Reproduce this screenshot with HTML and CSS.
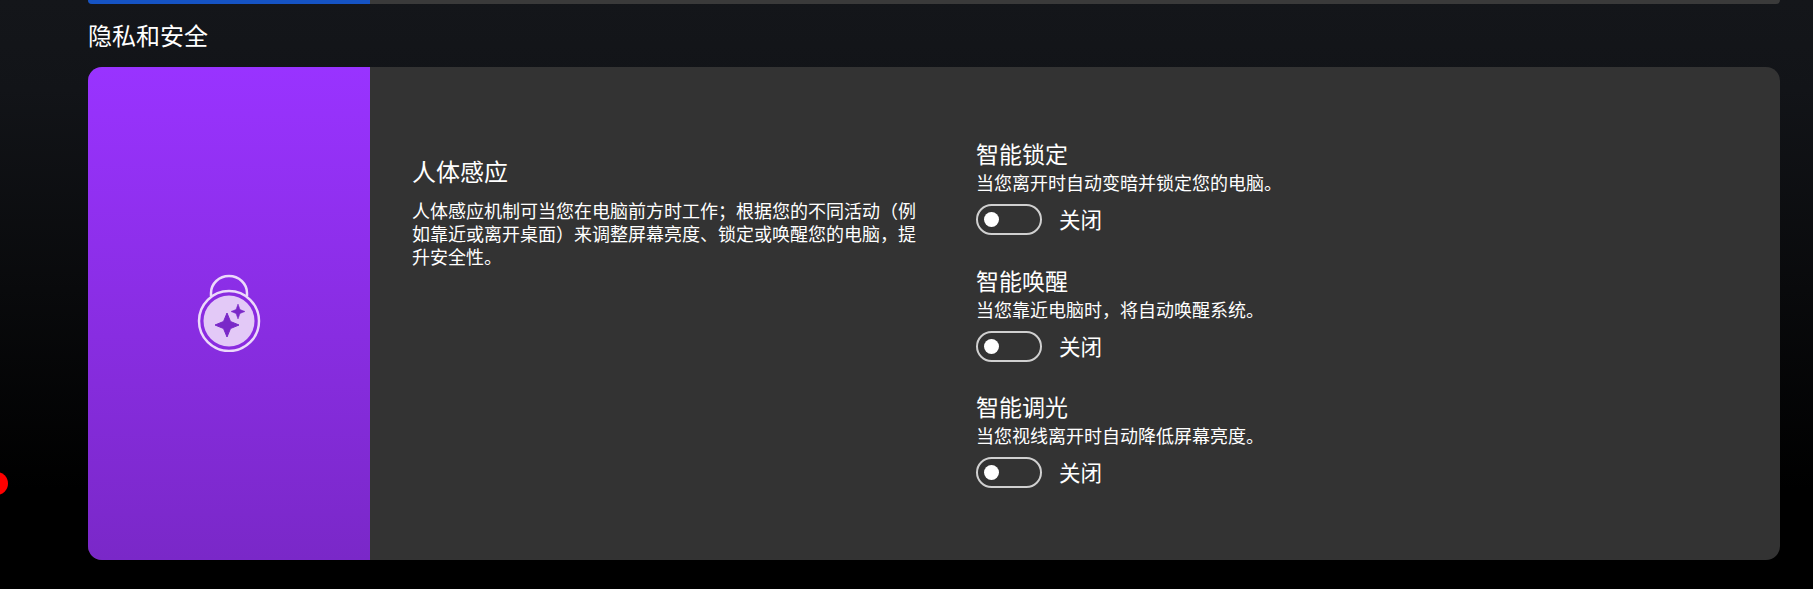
FILE: index.html

```html
<!DOCTYPE html>
<html lang="zh-CN">
<head>
  <meta charset="UTF-8">
  <title>隐私和安全</title>
  <link rel="stylesheet" href="styles.css">
</head>
<body>
  <div class="top-bar"><div class="top-bar-fill"></div></div>
  <h1 class="section-title">隐私和安全</h1>
  <div class="card">
    <div class="card-side">
      <svg class="lock-icon" width="66" height="80" viewBox="0 0 66 80">
        <path d="M15 24 V21 A18 17 0 0 1 51 21 V24" fill="none" stroke="#ecd9fb" stroke-width="2.5"/>
        <circle cx="33" cy="49" r="30" fill="#8a2be0" stroke="#ecd9fb" stroke-width="2.5"/>
        <circle cx="33" cy="49" r="25.5" fill="#e3c9f7"/>
        <path d="M31 41 L34.500 49.500 L43 53 L34.500 56.500 L31 65 L27.500 56.500 L19 53 L27.500 49.500 Z" fill="#7a28c8" stroke="#7a28c8" stroke-linejoin="round"/>
        <path d="M42 32 L44 37.500 L49 39.500 L44 41.500 L42 47 L40 41.500 L35 39.500 L40 37.500 Z" fill="#7a28c8" stroke="#7a28c8" stroke-width="0.5" stroke-linejoin="round"/>
      </svg>
    </div>
    <div class="card-body">
      <div class="intro">
        <h2 class="intro-title">人体感应</h2>
        <p class="intro-text">人体感应机制可当您在电脑前方时工作；根据您的不同活动（例如靠近或离开桌面）来调整屏幕亮度、锁定或唤醒您的电脑，提升安全性。</p>
      </div>
      <div class="options">
        <div class="option">
          <h3 class="option-title">智能锁定</h3>
          <p class="option-text">当您离开时自动变暗并锁定您的电脑。</p>
          <div class="switch-row"><span class="switch"><span class="knob"></span></span><span class="switch-label">关闭</span></div>
        </div>
        <div class="option">
          <h3 class="option-title">智能唤醒</h3>
          <p class="option-text">当您靠近电脑时，将自动唤醒系统。</p>
          <div class="switch-row"><span class="switch"><span class="knob"></span></span><span class="switch-label">关闭</span></div>
        </div>
        <div class="option">
          <h3 class="option-title">智能调光</h3>
          <p class="option-text">当您视线离开时自动降低屏幕亮度。</p>
          <div class="switch-row"><span class="switch"><span class="knob"></span></span><span class="switch-label">关闭</span></div>
        </div>
      </div>
    </div>
  </div>
  <div class="red-dot"></div>
</body>
</html>
```

FILE: styles.css

```css
html {
  height: 100%;
}
body {
  margin: 0;
  height: 589px;
  overflow: hidden;
  position: relative;
  box-sizing: border-box;
  padding: 0 33px 0 88px;
  background: linear-gradient(to bottom, #14161a 0, #121418 90px, #000 490px);
  font-family: "Noto Sans CJK SC", "Noto Sans", sans-serif;
  color: #fff;
}
.top-bar {
  height: 4px;
  background: #3a3a3a;
  border-radius: 0 0 12px 12px;
  overflow: hidden;
}
.top-bar-fill {
  width: 282px;
  height: 100%;
  background: #1553c4;
}
.section-title {
  margin: 0;
  height: 63px;
  font-size: 24px;
  font-weight: 400;
  line-height: 62px;
}
.card {
  display: flex;
  height: 493px;
  background: #333;
  border-radius: 14px;
  overflow: hidden;
}
.card-side {
  flex: 0 0 282px;
  display: flex;
  align-items: center;
  justify-content: center;
  box-sizing: border-box;
  padding-bottom: 3px;
  background: linear-gradient(to bottom, #9933ff, #7a28c8);
}
.card-body {
  flex: 1;
  display: flex;
  padding: 71px 0 0 42px;
}
.intro {
  width: 510px;
  margin-right: 12px;
  padding-top: 16px;
}
.intro-title {
  margin: 0 0 11px;
  font-size: 24px;
  font-weight: 400;
  line-height: 34px;
}
.intro-text {
  margin: 0;
  font-size: 18px;
  line-height: 23px;
}
.options {
  display: flex;
  flex-direction: column;
  gap: 29.5px;
  margin-left: 42px;
}
.option-title {
  margin: 0 0 2px;
  font-size: 23px;
  font-weight: 400;
  line-height: 30px;
}
.option-text {
  margin: 0 0 10px;
  font-size: 18px;
  line-height: 24px;
}
.switch-row {
  display: flex;
  align-items: center;
  gap: 17px;
}
.switch {
  display: flex;
  align-items: center;
  box-sizing: border-box;
  width: 66px;
  height: 31px;
  padding-left: 6px;
  border: 2px solid #d0d0d0;
  border-radius: 16px;
}
.knob {
  width: 15px;
  height: 15px;
  border-radius: 50%;
  background: #fff;
}
.switch-label {
  padding-bottom: 2px;
  font-size: 21.5px;
  line-height: 29px;
}
.red-dot {
  position: absolute;
  left: -15px;
  top: 472px;
  width: 23px;
  height: 23px;
  border-radius: 50%;
  background: #f00;
}
```
